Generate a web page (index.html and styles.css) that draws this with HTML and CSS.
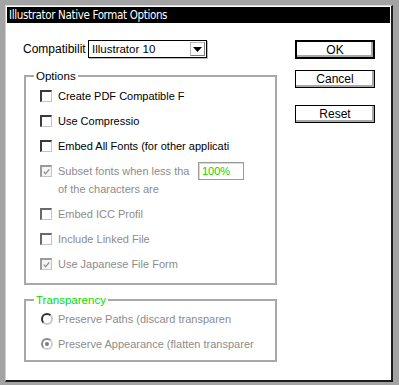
FILE: index.html
```html
<!DOCTYPE html>
<html>
<head>
<meta charset="utf-8">
<link rel="stylesheet" href="styles.css">
</head>
<body>
<div class="window">
  <div class="titlebar">Illustrator Native Format Options</div>
  <div class="content">
    <div class="left">
      <div class="compat">
        <span class="compat-label">Compatibilit</span>
        <div class="select">
          <span class="select-text">Illustrator 10</span>
          <span class="select-arrow"><svg width="9" height="5" viewBox="0 0 9 5"><path d="M0 0H9L4.5 5Z" fill="#000"/></svg></span>
        </div>
      </div>
      <fieldset class="group options">
        <legend class="legend">Options</legend>
        <div class="rows">
          <div class="row"><span class="check"></span><span class="text">Create PDF Compatible F</span></div>
          <div class="row"><span class="check"></span><span class="text">Use Compressio</span></div>
          <div class="row"><span class="check"></span><span class="text">Embed All Fonts (for other applicati</span></div>
          <div class="subset">
            <div class="row"><span class="check disabled checked"><svg width="10" height="10" viewBox="0 0 10 10"><path d="M2 4.5L4 7L8 2" fill="none" stroke="#8c8c8c" stroke-width="1.4"/></svg></span><span class="text dis subset-label">Subset fonts when less tha</span><span class="pct">100%</span></div>
            <div class="row second"><span class="text dis">of the characters are</span></div>
          </div>
          <div class="row"><span class="check disabled"></span><span class="text dis">Embed ICC Profil</span></div>
          <div class="row"><span class="check disabled"></span><span class="text dis">Include Linked File</span></div>
          <div class="row"><span class="check disabled checked"><svg width="10" height="10" viewBox="0 0 10 10"><path d="M2 4.5L4 7L8 2" fill="none" stroke="#8c8c8c" stroke-width="1.4"/></svg></span><span class="text dis">Use Japanese File Form</span></div>
        </div>
      </fieldset>
      <fieldset class="group transp">
        <legend class="legend green">Transparency</legend>
        <div class="rows">
          <div class="row"><span class="radio"></span><span class="text dis">Preserve Paths (discard transparen</span></div>
          <div class="row"><span class="radio disabled on"></span><span class="text dis">Preserve Appearance (flatten transparer</span></div>
        </div>
      </fieldset>
    </div>
    <div class="right">
      <div class="btn default">OK</div>
      <div class="btn">Cancel</div>
      <div class="btn reset">Reset</div>
    </div>
  </div>
</div>
</body>
</html>
```
FILE: styles.css
```css
html, body {
  margin: 0;
  padding: 0;
}
body {
  background: #a3a3a3;
  width: 399px;
  height: 385px;
  padding: 5px 0 0 5px;
  box-sizing: border-box;
  font-family: "Liberation Sans", Arial, sans-serif;
  font-size: 12px;
  color: #000;
}
.window {
  width: 388px;
  height: 377px;
  box-sizing: border-box;
  background: #fff;
  border-top: 1px solid #d8d8d8;
  border-left: 1px solid #d0d0d0;
  border-right: 2px solid #1c1c1c;
  border-bottom: 2px solid #1c1c1c;
  padding: 1px 1px 0 1px;
}
.titlebar {
  height: 16px;
  background: #000;
  color: #fff;
  font-family: "Liberation Sans Narrow", "DejaVu Sans Condensed", sans-serif;
  font-size: 11.5px;
  letter-spacing: -0.35px;
  line-height: 16px;
  padding-left: 2px;
  white-space: nowrap;
  overflow: hidden;
}
.content {
  display: flex;
  gap: 18px;
  padding: 17px 0 0 16px;
}
.left {
  width: 254px;
  display: flex;
  flex-direction: column;
}
.compat {
  display: flex;
  align-items: center;
  height: 18px;
  gap: 1px;
}
.compat-label {
  width: 64px;
  overflow: hidden;
  white-space: nowrap;
}
.select {
  width: 119px;
  height: 18px;
  box-sizing: border-box;
  border: 1px solid #000;
  box-shadow: 1px 1px 0 #bdbdbd;
  display: flex;
  align-items: center;
  justify-content: space-between;
}
.select-text {
  padding-left: 3px;
  font-size: 11.5px;
}
.select-arrow {
  width: 15px;
  height: 14px;
  margin-right: 1px;
  box-sizing: border-box;
  border: 1px solid #b8b8b8;
  border-right-color: #808080;
  border-bottom-color: #808080;
  display: flex;
  align-items: center;
  justify-content: center;
}
.group {
  margin: 11px 0 0 1px;
  width: 253px;
  box-sizing: border-box;
  border: 2px solid #a8a8a8;
  padding: 0;
  min-width: 0;
}
.transp {
  margin-top: 8px;
}
.legend {
  margin-left: 8px;
  padding: 0 2px;
  line-height: 14px;
  font-size: 11.5px;
}
.green {
  color: #00e000;
}
.rows {
  display: flex;
  flex-direction: column;
  gap: 9px;
  padding: 5px 0 11px 14px;
}
.transp .rows {
  padding: 4px 0 8px 15px;
}
.row {
  display: flex;
  align-items: center;
  height: 16px;
  white-space: nowrap;
}
.subset {
  display: flex;
  flex-direction: column;
  gap: 2px;
}
.row.second {
  padding-left: 18px;
}
.check {
  width: 12px;
  height: 12px;
  box-sizing: border-box;
  border-top: 2px solid #3a3a3a;
  border-left: 2px solid #3a3a3a;
  border-right: 1px solid #c4c4c4;
  border-bottom: 1px solid #c4c4c4;
  margin-right: 6px;
  flex: none;
  display: flex;
  align-items: center;
  justify-content: center;
}
.check.disabled {
  border-top-color: #6a6a6a;
  border-left-color: #6a6a6a;
}
.check.checked {
  border-top-color: #9a9a9a;
  border-left-color: #9a9a9a;
  background: #f4f4f4;
}
.radio {
  width: 12px;
  height: 12px;
  box-sizing: border-box;
  border-radius: 50%;
  border: 2px solid #333;
  border-right-color: #c8c8c8;
  border-bottom-color: #c8c8c8;
  margin-right: 5px;
  flex: none;
  display: flex;
  align-items: center;
  justify-content: center;
}
.radio.disabled {
  border-color: #8a8a8a #d0d0d0 #d0d0d0 #8a8a8a;
}
.radio.on::after {
  content: "";
  width: 4px;
  height: 4px;
  border-radius: 50%;
  background: #7a7a7a;
}
.text {
  white-space: nowrap;
  font-size: 11px;
}
.dis {
  color: #8c8c8c;
}
.subset-label {
  width: 136px;
}
.pct {
  margin-left: 4px;
  width: 46px;
  height: 18px;
  box-sizing: border-box;
  border: 1px solid #9a9a9a;
  box-shadow: inset 1px 1px 0 #d8d8d8;
  color: #00d800;
  font-size: 11px;
  padding-left: 3px;
  line-height: 16px;
  flex: none;
}
.right {
  width: 80px;
  display: flex;
  flex-direction: column;
}
.btn {
  height: 18px;
  box-sizing: border-box;
  border: 1px solid #000;
  box-shadow: inset -2px -2px 0 #a8a8a8;
  display: flex;
  align-items: center;
  justify-content: center;
  margin-top: 11px;
}
.btn.default {
  height: 19px;
  margin-top: 0;
  border: 2px solid #000;
}
.btn.reset {
  margin-top: 17px;
}
```
